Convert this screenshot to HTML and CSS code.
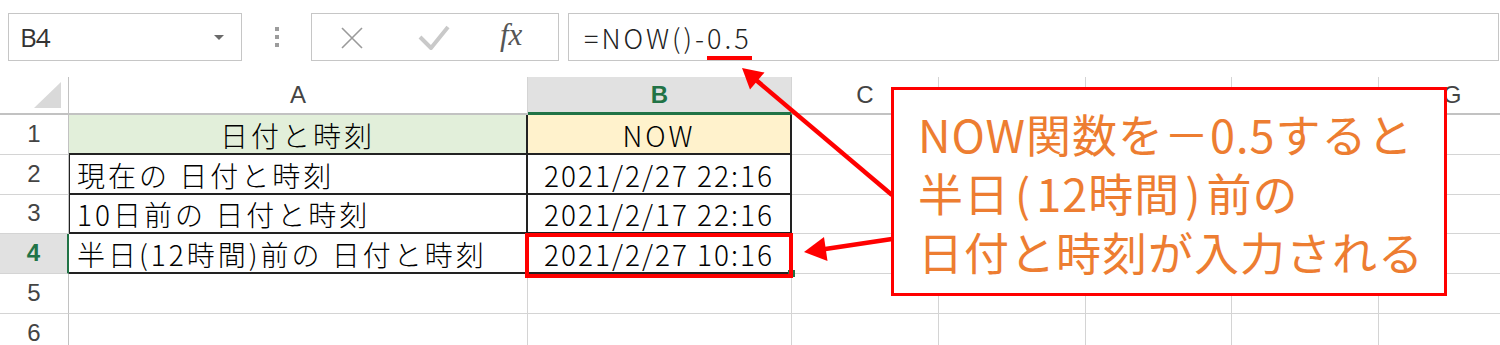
FILE: index.html
```html
<!DOCTYPE html>
<html lang="ja">
<head>
<meta charset="utf-8">
<title>NOW関数</title>
<link rel="stylesheet" href="styles.css">
</head>
<body>
<div class="toolbar">
  <div class="namebox"><span class="ref">B4</span><span class="caret"></span></div>
  <div class="dots"><i></i><i></i><i></i></div>
  <div class="fxbox">
    <svg class="ico-x" width="24" height="24" viewBox="0 0 24 24"><path d="M2 2 L22 22 M22 2 L2 22" stroke="#9a9a9a" stroke-width="1.6" fill="none"/></svg>
    <svg class="ico-ok" width="32" height="28" viewBox="0 0 32 28"><path d="M2 13 L13 24 L30 3" stroke="#c9c9c9" stroke-width="4" fill="none" stroke-linejoin="round"/></svg>
    <span class="fx">fx</span>
  </div>
  <div class="formula"><span class="ftext">=NOW()-<span class="mark">0.5</span></span></div>
</div>

<div class="sheet">
  <div class="c corner"><svg width="28" height="27" viewBox="0 0 28 27"><polygon points="27,0 27,26 0,26" fill="#d9d9d9"/></svg></div>
  <div class="c ch">A</div>
  <div class="c ch sel">B</div>
  <div class="c ch">C</div>
  <div class="c ch"></div>
  <div class="c ch"></div>
  <div class="c ch"></div>
  <div class="c ch">G</div>

  <div class="c rh">1</div>
  <div class="c d a1 ctr">日付と時刻</div>
  <div class="c d b1 ctr">NOW</div>
  <div class="c"></div><div class="c"></div><div class="c"></div><div class="c"></div><div class="c"></div>

  <div class="c rh">2</div>
  <div class="c d la">現在の 日付と時刻</div>
  <div class="c d ctr dt">2021/2/27 22:16</div>
  <div class="c"></div><div class="c"></div><div class="c"></div><div class="c"></div><div class="c"></div>

  <div class="c rh">3</div>
  <div class="c d la">10日前の 日付と時刻</div>
  <div class="c d ctr dt">2021/2/17 22:16</div>
  <div class="c"></div><div class="c"></div><div class="c"></div><div class="c"></div><div class="c"></div>

  <div class="c rh sel">4</div>
  <div class="c d">半日(12時間)前の 日付と時刻</div>
  <div class="c d ctr dt">2021/2/27 10:16</div>
  <div class="c"></div><div class="c"></div><div class="c"></div><div class="c"></div><div class="c"></div>

  <div class="c rh">5</div>
  <div class="c"></div><div class="c"></div><div class="c"></div><div class="c"></div><div class="c"></div><div class="c"></div><div class="c"></div>

  <div class="c rh">6</div>
  <div class="c"></div><div class="c"></div><div class="c"></div><div class="c"></div><div class="c"></div><div class="c"></div><div class="c"></div>
</div>

<div class="handle"></div>
<div class="selbox"></div>

<svg class="arrows" width="1500" height="345" viewBox="0 0 1500 345">
  <line x1="892" y1="195" x2="756" y2="80" stroke="#ff0000" stroke-width="4.5"/>
  <polygon points="742,68 764.5,72.5 750,89.5" fill="#ff0000"/>
  <line x1="892" y1="239" x2="822" y2="249.5" stroke="#ff0000" stroke-width="4.5"/>
  <polygon points="804,252 824,237 827.5,261" fill="#ff0000"/>
</svg>

<div class="callout">
  <div class="line">NOW関数を－0.5すると</div>
  <div class="line">半日<span class="p">(</span>12時間<span class="p">)</span>前の</div>
  <div class="line">日付と時刻が入力される</div>
</div>
</body>
</html>
```

FILE: styles.css
```css
* { box-sizing: border-box; }
html, body { margin: 0; padding: 0; }
body {
  width: 1500px;
  height: 345px;
  overflow: hidden;
  position: relative;
  background: #fff;
  font-family: "Liberation Sans", Arial, sans-serif;
}

/* formula bar */
.toolbar {
  display: flex;
  align-items: flex-start;
  height: 77px;
  padding: 13px 0 0 8px;
}
.namebox {
  width: 234px;
  height: 48px;
  border: 1px solid #c6c6c6;
  display: flex;
  align-items: center;
  justify-content: space-between;
  padding: 0 17px 0 11px;
}
.ref {
  font-family: "Open Sans", "Liberation Sans", sans-serif;
  font-size: 26px;
  color: #333;
  letter-spacing: -1px;
}
.caret {
  width: 0;
  height: 0;
  border-left: 5px solid transparent;
  border-right: 5px solid transparent;
  border-top: 5px solid #6a6a6a;
}
.dots {
  width: 69px;
  height: 48px;
  display: flex;
  flex-direction: column;
  align-items: center;
  justify-content: center;
  gap: 4px;
}
.dots i {
  display: block;
  width: 4px;
  height: 4px;
  background: #9c9c9c;
}
.fxbox {
  width: 248px;
  height: 48px;
  border: 1px solid #c6c6c6;
  display: flex;
  align-items: center;
  padding-left: 28px;
}
.ico-x { margin-top: 1px; }
.ico-ok { margin-left: 54px; margin-top: 2px; }
.fx {
  margin-left: 50px;
  font-family: "Liberation Serif", "DejaVu Serif", serif;
  font-style: italic;
  font-size: 31px;
  color: #555;
  margin-top: -4px;
}
.formula {
  flex: 1;
  margin-left: 9px;
  margin-right: 1px;
  height: 48px;
  border: 1px solid #c6c6c6;
  display: flex;
  align-items: center;
  padding-left: 15px;
}
.ftext {
  font-family: "Noto Sans CJK JP", "Liberation Sans", sans-serif;
  font-weight: 300;
  font-size: 27px;
  line-height: 27px;
  letter-spacing: 3px;
  color: #222;
}
.mark {
  display: inline-block;
  border-bottom: 4px solid #ff0000;
  padding-bottom: 5px;
  margin-bottom: -9px;
}

/* sheet grid */
.sheet {
  display: grid;
  grid-template-columns: 69px 459px 264px 147px 147px 146px 147px 147px;
  grid-template-rows: 38px 40px 40px 39px 40px 40px 40px;
}
.c {
  border-right: 1px solid #d4d4d4;
  border-bottom: 1px solid #d4d4d4;
  display: flex;
  align-items: flex-end;
  padding: 0 0 3px 8px;
  font-family: "Noto Sans CJK JP", sans-serif;
  font-weight: 300;
  font-size: 28px;
  line-height: 30px;
  letter-spacing: 3px;
  color: #000;
  white-space: nowrap;
  overflow: hidden;
}
.corner {
  border-right: 1px solid #c2c2c2;
  border-bottom: 2px solid #c2c2c2;
  align-items: flex-end;
  justify-content: flex-end;
  padding: 0 6px 4px 0;
}
.corner svg { display: block; }
.ch {
  justify-content: center;
  align-items: center;
  padding: 0;
  font-family: "Liberation Sans", Arial, sans-serif;
  font-weight: normal;
  font-size: 24px;
  letter-spacing: 0;
  color: #444;
  border-bottom: 2px solid #c2c2c2;
}
.ch.sel {
  background: #e1e1e1;
  color: #217346;
  font-weight: bold;
  border-bottom: 3px solid #217346;
}
.rh {
  justify-content: center;
  padding: 0 0 5px 0;
  font-family: "Liberation Sans", Arial, sans-serif;
  font-weight: normal;
  font-size: 24px;
  letter-spacing: 0;
  color: #444;
  border-right: 1px solid #c2c2c2;
}
.rh.sel {
  background: #e1e1e1;
  color: #217346;
  font-weight: bold;
  border-right: 2px solid #217346;
}
.d {
  border-right: 2px solid #222;
  border-bottom: 2px solid #222;
}
.la { border-left: 1px solid #222; padding-left: 7px; }
.ctr { justify-content: center; padding-left: 0; }
.dt { letter-spacing: 2px; }
.a1 { background: #e2efda; }
.b1 { background: #fff2cc; }

/* overlays */
.handle {
  position: absolute;
  left: 788px;
  top: 270px;
  width: 7px;
  height: 7px;
  background: #217346;
}
.selbox {
  position: absolute;
  left: 525px;
  top: 233px;
  width: 268px;
  height: 45px;
  border: 4px solid #ff0000;
}
.arrows {
  position: absolute;
  left: 0;
  top: 0;
  pointer-events: none;
}
.callout {
  position: absolute;
  left: 891px;
  top: 87px;
  width: 556px;
  height: 209px;
  border: 3px solid #ff0000;
  background: #fff;
  padding: 14px 0 0 24px;
  font-family: "Noto Sans CJK JP", sans-serif;
  font-size: 45px;
  line-height: 59px;
  letter-spacing: 1px;
  color: #ed7d31;
  white-space: nowrap;
}
.callout .p { padding: 0 5px; }
```
